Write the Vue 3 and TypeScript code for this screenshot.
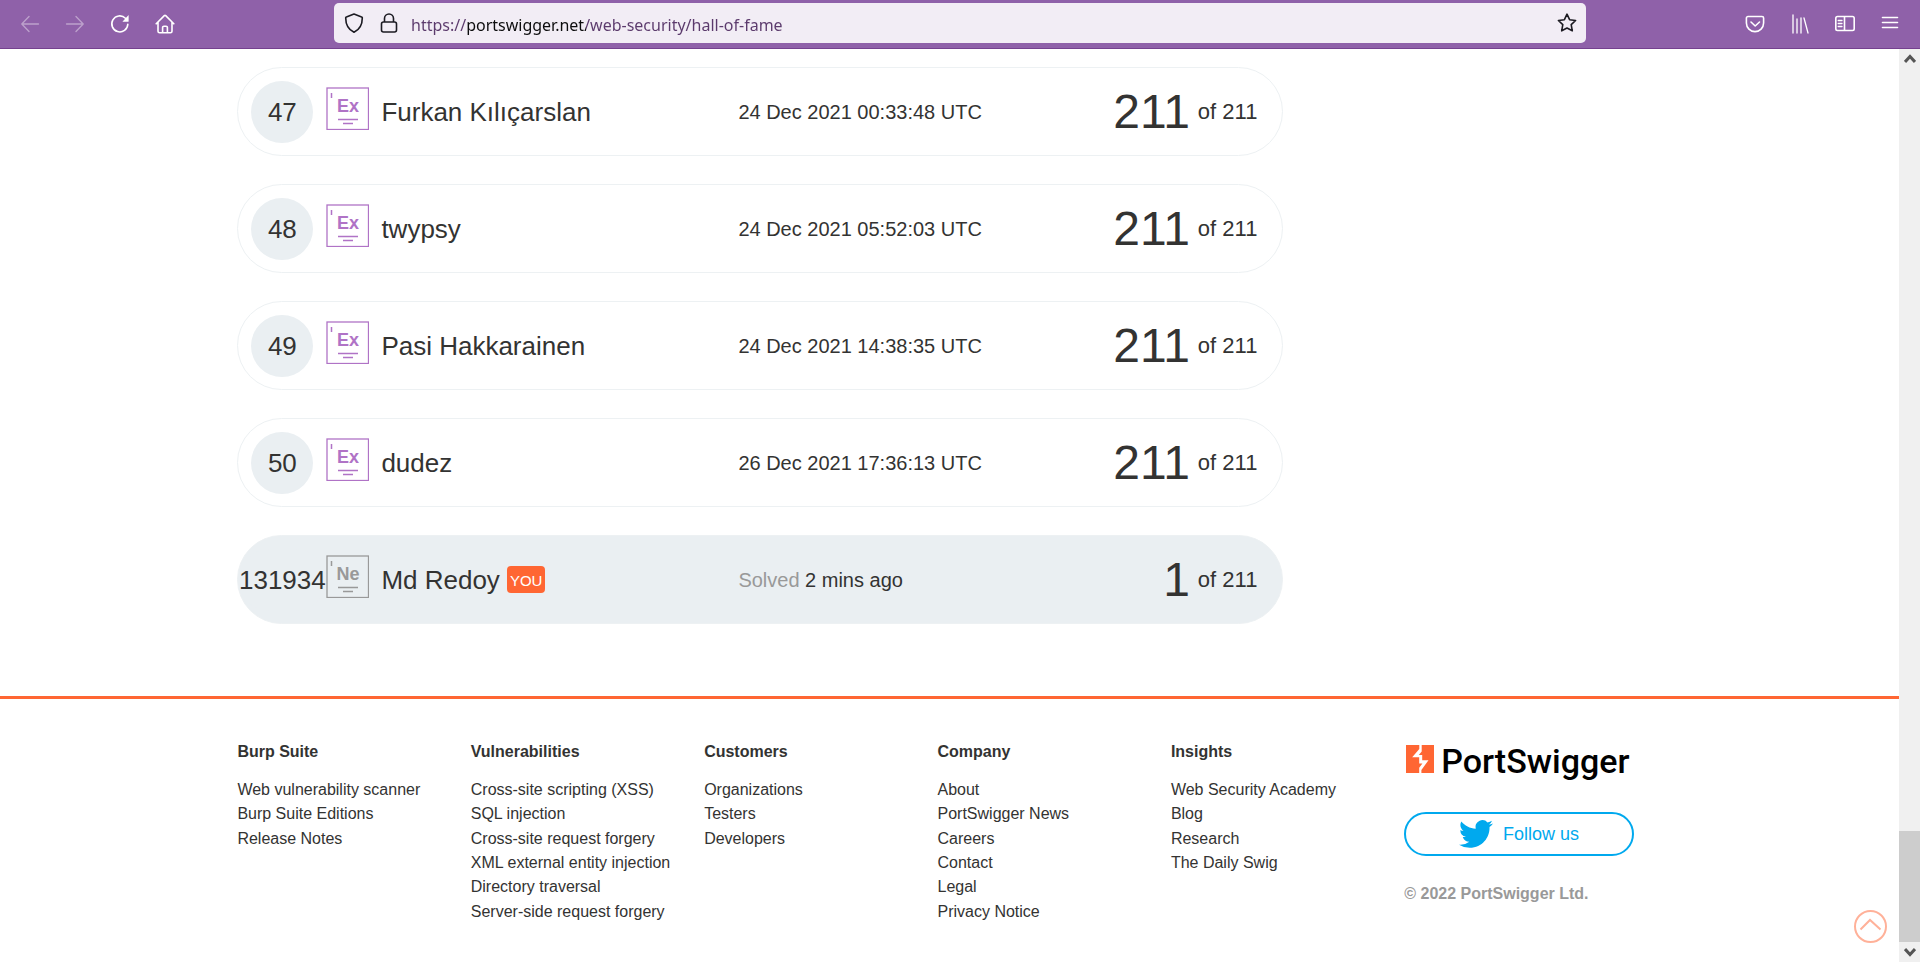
<script setup lang="ts">
import { ref } from 'vue'

interface Entry {
  rank: number
  level: 'Ex' | 'Ne'
  name: string
  prefix?: string
  when: string
  solved: number
  you?: boolean
}

interface LinkGroup {
  title: string
  links: string[]
}

const total = 211
const address = ref('https://portswigger.net/web-security/hall-of-fame')

const entries: Entry[] = [
  { rank: 47, level: 'Ex', name: 'Furkan Kılıçarslan', when: '24 Dec 2021 00:33:48 UTC', solved: 211 },
  { rank: 48, level: 'Ex', name: 'twypsy', when: '24 Dec 2021 05:52:03 UTC', solved: 211 },
  { rank: 49, level: 'Ex', name: 'Pasi Hakkarainen', when: '24 Dec 2021 14:38:35 UTC', solved: 211 },
  { rank: 50, level: 'Ex', name: 'dudez', when: '26 Dec 2021 17:36:13 UTC', solved: 211 },
  { rank: 131934, level: 'Ne', name: 'Md Redoy', prefix: 'Solved', when: '2 mins ago', solved: 1, you: true },
]

const groups: LinkGroup[] = [
  { title: 'Burp Suite', links: ['Web vulnerability scanner', 'Burp Suite Editions', 'Release Notes'] },
  {
    title: 'Vulnerabilities',
    links: [
      'Cross-site scripting (XSS)',
      'SQL injection',
      'Cross-site request forgery',
      'XML external entity injection',
      'Directory traversal',
      'Server-side request forgery',
    ],
  },
  { title: 'Customers', links: ['Organizations', 'Testers', 'Developers'] },
  { title: 'Company', links: ['About', 'PortSwigger News', 'Careers', 'Contact', 'Legal', 'Privacy Notice'] },
  { title: 'Insights', links: ['Web Security Academy', 'Blog', 'Research', 'The Daily Swig'] },
]
</script>

<template>
  <div class="browser">
    <header class="toolbar">
      <nav class="tools" aria-label="Navigation">
        <button type="button" aria-label="Back" disabled>
          <svg width="20" height="20" viewBox="0 0 20 20"><path d="M18.5 10H2M9 2.5 1.8 10 9 17.5" /></svg>
        </button>
        <button type="button" aria-label="Forward" disabled>
          <svg width="20" height="20" viewBox="0 0 20 20"><path d="M1.5 10H18M11 2.5l7.2 7.5-7.2 7.5" /></svg>
        </button>
        <button type="button" aria-label="Reload">
          <svg width="20" height="20" viewBox="0 0 20 20">
            <path class="bold" d="M17.8 10.2A8 8 0 1 1 15.4 4.2" />
            <path class="solid" d="M18.6 1v6.2a.6.6 0 0 1-.6.6h-5.6z" />
          </svg>
        </button>
        <button type="button" aria-label="Home">
          <svg width="20" height="20" viewBox="0 0 20 20">
            <path class="bold" d="M1.2 9.8 9.3 1.6a1 1 0 0 1 1.4 0l8.1 8.2M3 8.2v9a1.6 1.6 0 0 0 1.6 1.6h10.8a1.6 1.6 0 0 0 1.6-1.6v-9M7.6 18.5v-5a1.3 1.3 0 0 1 1.3-1.3h2.2a1.3 1.3 0 0 1 1.3 1.3v5" />
          </svg>
        </button>
      </nav>

      <div class="urlbar">
        <svg class="shield" width="20" height="20" viewBox="0 0 20 20">
          <path d="M10 1 17.6 3.9a1 1 0 0 1 .7 1C18.3 11 16.6 16 10 19.2 3.4 16 1.7 11 1.7 4.9a1 1 0 0 1 .7-1z" />
        </svg>
        <svg class="lock" width="18" height="20" viewBox="0 0 18 20">
          <rect x="1.5" y="9" width="15" height="10" rx="2" />
          <path d="M4.5 9V5.5a4.5 4.5 0 0 1 9 0V9" />
        </svg>
        <input v-model="address" type="text" aria-label="Address" spellcheck="false" />
        <button class="star" type="button" aria-label="Bookmark this page">
          <svg width="20" height="20" viewBox="0 0 20 20">
            <path d="m10 1.2 2.6 5.5 6 .8-4.4 4.2 1.1 6.1L10 15l-5.3 2.8 1.1-6.1L1.4 7.5l6-.8z" />
          </svg>
        </button>
      </div>

      <nav class="tools" aria-label="Browser tools">
        <button type="button" aria-label="Pocket">
          <svg width="20" height="20" viewBox="0 0 20 20">
            <path class="bold" d="M3 2.5h14a1.6 1.6 0 0 1 1.6 1.6V9a8.3 8.3 0 0 1-17.2 0V4.1A1.6 1.6 0 0 1 3 2.5M6 8l4.2 4L14.5 8" />
          </svg>
        </button>
        <button type="button" aria-label="Library">
          <svg width="20" height="20" viewBox="0 0 20 20"><path d="M3 1v18M7 5v14M11 4v15M14 4l4 15" /></svg>
        </button>
        <button type="button" aria-label="Sidebar">
          <svg width="20" height="20" viewBox="0 0 20 20">
            <path class="bold" d="M2.5 2.5h15A1.7 1.7 0 0 1 19.2 4.2v10.6a1.7 1.7 0 0 1-1.7 1.7h-15A1.7 1.7 0 0 1 .8 14.8V4.2A1.7 1.7 0 0 1 2.5 2.5M9.5 2.5v14" />
            <path d="M3.2 6.500H7M3.2 9.5H7M3.2 12.5H7" />
          </svg>
        </button>
        <button type="button" aria-label="Menu">
          <svg width="20" height="20" viewBox="0 0 20 20"><path class="bold" d="M2.5 3.5h15M2.5 8.5h15M2.5 13.5h15" /></svg>
        </button>
      </nav>
    </header>

    <div class="viewport">
      <div class="page">
        <main class="container">
          <table class="ranking">
            <tbody>
              <tr v-for="entry in entries" :key="entry.rank" :class="{ mine: entry.you }">
                <td class="rank"><span>{{ entry.rank }}</span></td>
                <td class="level" :class="entry.level === 'Ex' ? 'expert' : 'newbie'">
                  <svg width="43" height="43" viewBox="0 0 43 43">
                    <rect x="1" y="1" width="41.5" height="41.5" />
                    <path d="M5.5 6v5M12 32.5h20M17 36.5h10" />
                    <text x="22" y="25" text-anchor="middle">{{ entry.level }}</text>
                  </svg>
                </td>
                <td class="name">
                  {{ entry.name }}<span v-if="entry.you" class="you">YOU</span>
                </td>
                <td class="when"><span v-if="entry.prefix">{{ entry.prefix }}</span> {{ entry.when }}</td>
                <td class="score"><strong>{{ entry.solved }}</strong><span>of {{ total }}</span></td>
              </tr>
            </tbody>
          </table>
        </main>

        <footer>
          <div class="container columns">
            <section v-for="group in groups" :key="group.title">
              <h2>{{ group.title }}</h2>
              <ul>
                <li v-for="link in group.links" :key="link"><a href="#">{{ link }}</a></li>
              </ul>
            </section>
            <section class="company">
              <a class="brand" href="#">
                <svg width="28" height="28" viewBox="0 0 28 28">
                  <rect width="28" height="28" fill="#ff6633" />
                  <path fill="#fff" d="M13.3 0h2.4v6.6l-2.9 3.3h3.4v5.3h6.3L15.4 25v3h-2.2v-5.2l3.2-4.3h-3.2v-6.2H6.2L13.3 4z" />
                </svg>
                <span>PortSwigger</span>
              </a>
              <a class="follow" href="#">
                <svg width="34" height="34" viewBox="0 0 24 24">
                  <path fill="currentColor" d="M23.953 4.57a10 10 0 0 1-2.825.775 4.958 4.958 0 0 0 2.163-2.723c-.951.555-2.005.959-3.127 1.184a4.92 4.92 0 0 0-8.384 4.482C7.69 8.095 4.067 6.13 1.64 3.162a4.822 4.822 0 0 0-.666 2.475c0 1.71.87 3.213 2.188 4.096a4.904 4.904 0 0 1-2.228-.616v.06a4.923 4.923 0 0 0 3.946 4.827 4.996 4.996 0 0 1-2.212.085 4.936 4.936 0 0 0 4.604 3.417 9.867 9.867 0 0 1-6.102 2.105c-.39 0-.779-.023-1.17-.067a13.995 13.995 0 0 0 7.557 2.209c9.053 0 13.998-7.496 13.998-13.985 0-.21 0-.42-.015-.63a9.935 9.935 0 0 0 2.46-2.548z" />
                </svg>
                <span>Follow us</span>
              </a>
              <p>© 2022 PortSwigger Ltd.</p>
            </section>
          </div>
        </footer>

        <button class="to-top" type="button" aria-label="Back to top">
          <svg width="33" height="33" viewBox="0 0 33 33">
            <circle cx="16.5" cy="16.5" r="15.5" />
            <path d="m6.5 19.5 9.5-9.5 10.5 9.5" />
          </svg>
        </button>
      </div>

      <div class="scrollbar">
        <button type="button" aria-label="Scroll up">
          <svg width="12" height="10" viewBox="0 0 12 10"><path d="m1 8 5-5.5L11 8" /></svg>
        </button>
        <div class="track"><div class="thumb"></div></div>
        <button type="button" aria-label="Scroll down">
          <svg width="12" height="10" viewBox="0 0 12 10"><path d="m1 2 5 5.5L11 2" /></svg>
        </button>
      </div>
    </div>
  </div>
</template>

<style>
body {
  margin: 0;
}
</style>

<style scoped>
.browser {
  display: flex;
  flex-direction: column;
  height: 100vh;
  overflow: hidden;
  color: #333332;
  background: #fff;
  font-family: "Liberation Sans", Arial, sans-serif;
  font-size: 16px;
  line-height: 24px;
}

.browser * {
  box-sizing: border-box;
}

button {
  display: flex;
  align-items: center;
  justify-content: center;
  padding: 0;
  border: 0;
  background: none;
}

a {
  color: inherit;
  text-decoration: none;
}

/* browser toolbar */
.toolbar {
  display: flex;
  flex: none;
  align-items: flex-start;
  height: 49px;
  padding: 0 8px 0 7px;
  background: #8f61a9;
  border-bottom: 1px solid #75418f;
}

.tools {
  display: flex;
}

.tools button {
  width: 45px;
  height: 48px;
}

.tools svg {
  fill: none;
  stroke: #fff;
  stroke-width: 1.3;
  stroke-linecap: round;
  stroke-linejoin: round;
}

.tools .bold {
  stroke-width: 1.6;
}

.tools .solid {
  fill: #fff;
  stroke: none;
}

.tools button:disabled {
  opacity: 0.4;
}

.urlbar {
  display: flex;
  flex: 1;
  align-items: center;
  height: 40px;
  margin: 3px 146px 3px 147px;
  padding: 0 9px 0 10px;
  border-radius: 5px;
  background: #f2edf5;
}

.urlbar svg {
  flex: none;
  fill: none;
  stroke: #1c1b22;
  stroke-width: 1.6;
  stroke-linejoin: round;
}

.urlbar .lock {
  margin: 0 13px 0 16px;
}

.urlbar input {
  flex: 1;
  min-width: 0;
  height: 40px;
  padding: 4px 0 0;
  border: 0;
  outline: 0;
  color: transparent;
  background: linear-gradient(90deg, #5b3a6c 56px, #0c0c0d 56px 175px, #5b3a6c 175px);
  background-clip: text;
  font-family: "Noto Sans", sans-serif;
  font-size: 16px;
}

/* page and its scrollbar */
.viewport {
  display: flex;
  flex: 1;
  min-height: 0;
}

.page {
  position: relative;
  flex: 1;
  overflow: hidden;
}

.container {
  width: 75%;
  margin: 0 auto;
}

main {
  padding: 18px 0 72px;
}

.ranking {
  display: block;
  width: 1046px;
  max-width: 100%;
}

.ranking tbody {
  display: grid;
  gap: 28px;
}

.ranking tr {
  display: grid;
  grid-template-columns: 88px 55px 357px 1fr auto;
  align-items: center;
  height: 89px;
  padding-right: 25px;
  border: 1px solid #edf1f3;
  border-radius: 45px;
}

.ranking tr.mine {
  background: #eaeff2;
}

.ranking td {
  padding: 0;
  white-space: nowrap;
}

.rank {
  display: flex;
  justify-content: center;
  font-size: 26px;
}

.rank span {
  display: flex;
  align-items: center;
  justify-content: center;
  min-width: 62px;
  height: 62px;
  border-radius: 31px;
  background: #eaeff2;
}

.level svg {
  display: block;
  margin-bottom: 6px;
  fill: none;
  stroke: currentColor;
}

.level rect {
  stroke-width: 1.3;
}

.level path {
  stroke-width: 1.5;
}

.level text {
  fill: currentColor;
  stroke: none;
  font-size: 18px;
  font-weight: bold;
}

.expert {
  color: #b073c6;
}

.newbie {
  color: #999;
}

.name {
  display: flex;
  align-items: center;
  font-size: 26px;
}

.you {
  margin-left: 7px;
  padding: 2px 3px 0;
  border-radius: 4px;
  color: #fff;
  background: #ff6633;
  font-size: 15px;
  line-height: 25px;
}

.when {
  font-size: 20px;
}

.when span {
  color: #999;
}

.score {
  display: flex;
  align-items: center;
}

.score strong {
  font-size: 48px;
  font-weight: normal;
}

.score span {
  margin-left: 8px;
  font-size: 22px;
}

/* footer */
footer {
  border-top: 3px solid #ff6633;
}

.columns {
  display: grid;
  grid-template-columns: repeat(6, minmax(0, 1fr));
  padding: 41px 24px 0 0;
}

h2 {
  margin: 0 0 14px;
  font-size: 16px;
}

ul {
  display: grid;
  grid-template-rows: repeat(6, 1fr);
  height: 146px;
  margin: 0;
  padding: 0;
  list-style: none;
  white-space: nowrap;
}

.company {
  padding: 0 4px 0 0;
}

.brand {
  display: flex;
  align-items: center;
  gap: 7px;
  height: 38px;
  padding-left: 2px;
  color: #000;
  font-family: Roboto, sans-serif;
  font-size: 34px;
  font-weight: 500;
}

.brand span {
  padding-top: 4px;
}

.follow {
  display: flex;
  align-items: center;
  justify-content: center;
  gap: 10px;
  height: 44px;
  margin: 34px 0 26px;
  border: 2px solid #00a9ee;
  border-radius: 22px;
  color: #00a9ee;
  font-size: 18px;
}

.company p {
  margin: 0;
  color: #999;
  font-weight: bold;
}

.to-top {
  position: absolute;
  right: 12px;
  bottom: 19px;
}

.to-top svg {
  display: block;
  fill: none;
  stroke: #ffb199;
  stroke-width: 2;
}

.scrollbar {
  display: flex;
  flex: none;
  flex-direction: column;
  width: 21px;
  background: #f0f0f0;
}

.scrollbar button {
  height: 20px;
}

.scrollbar svg {
  fill: none;
  stroke: #555;
  stroke-width: 3;
}

.track {
  display: flex;
  flex: 1;
  flex-direction: column;
  justify-content: flex-end;
}

.thumb {
  height: 111px;
  background: #cdcdcd;
}
</style>
